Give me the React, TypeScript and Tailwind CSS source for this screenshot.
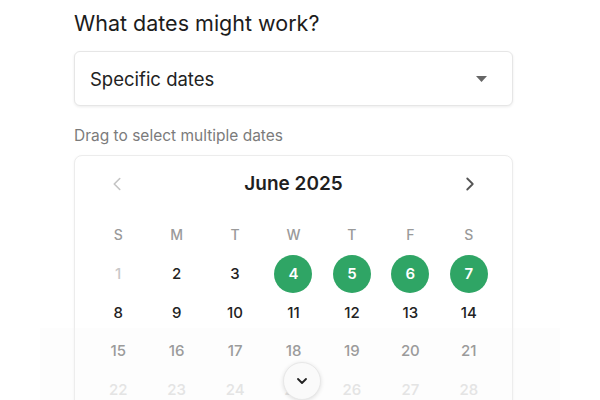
import React from 'react'
import { ChevronLeft, ChevronRight, ChevronDown } from 'lucide-react'

const weekdays = ['S', 'M', 'T', 'W', 'T', 'F', 'S']

const weeks = [
  [1, 2, 3, 4, 5, 6, 7],
  [8, 9, 10, 11, 12, 13, 14],
  [15, 16, 17, 18, 19, 20, 21],
  [22, 23, 24, 25, 26, 27, 28],
]

const selected = [4, 5, 6, 7]

function dayColor(row: number, day: number) {
  if (day === 1) return 'text-[#c8c8c8]'
  if (row === 1) return 'text-[#222222]'
  if (row === 2) return 'text-[#858585]'
  if (row === 3) return 'text-[#e0e0e0]'
  return 'text-[#222222]'
}

export default function App() {
  return (
    <div
      className="relative h-[400px] w-[600px] overflow-hidden bg-white"
      style={{ fontFamily: 'Inter, "Noto Sans", sans-serif' }}
    >
      <div className="ml-[74px] w-[439px] pt-[9px]">
        {/* Question */}
        <h1 className="h-[28px] text-[21.5px] leading-[28px] font-normal text-[#1c1c1c]">
          What dates might work?
        </h1>

        {/* Select */}
        <div className="mt-[14px] flex h-[55px] items-center justify-between rounded-md border border-[#e6e6e6] bg-white pr-[25px] pl-[15px] shadow-[0_1px_3px_rgba(0,0,0,0.08)]">
          <span className="mt-[2px] text-[18.5px] text-[#222222]">Specific dates</span>
          <svg width="11" height="6" viewBox="0 0 11 6" className="mt-[1px]">
            <path d="M0 0 L11 0 L5.5 6 Z" fill="#666666" />
          </svg>
        </div>

        <p className="mt-[20px] h-[20px] text-[15.5px] leading-[20px] text-[#7b7b7b]">
          Drag to select multiple dates
        </p>

        {/* Calendar */}
        <div className="mt-[9px] rounded-lg border border-[#ececec] bg-white px-[14px] pt-[8px] pb-4 shadow-[0_1px_3px_rgba(0,0,0,0.05)]">
          <div className="flex h-[40px] items-center justify-between px-[17px]">
            <ChevronLeft className="h-[22px] w-[22px] text-[#c4c4c4]" strokeWidth={1.75} />
            <span className="text-[19px] font-semibold text-[#1f1f1f]">June 2025</span>
            <ChevronRight className="h-[22px] w-[22px] text-[#555555]" strokeWidth={2} />
          </div>

          <div className="mt-[11px] grid h-[39px] grid-cols-7">
            {weekdays.map((w, i) => (
              <div
                key={i}
                className="flex items-center justify-center text-[14px] font-medium text-[#9a9a9a]"
              >
                {w}
              </div>
            ))}
          </div>

          <div className="mt-[1px] grid grid-cols-7 auto-rows-[38.5px]">
            {weeks.map((week, r) =>
              week.map((d) => (
                <div key={d} className="flex items-center justify-center">
                  {selected.includes(d) ? (
                    <span className="flex h-[38px] w-[38px] items-center justify-center rounded-full bg-[#2fa565] text-[15px] font-semibold text-white">
                      {d}
                    </span>
                  ) : (
                    <span className={`text-[15px] font-medium ${dayColor(r, d)}`}>{d}</span>
                  )}
                </div>
              )),
            )}
          </div>
        </div>
      </div>

      {/* Bottom fade */}
      <div className="pointer-events-none absolute right-[40px] bottom-0 left-[40px] h-[72px] bg-[#f5f5f5]/20" />

      {/* Scroll button */}
      <button className="absolute top-[362px] left-[283px] flex h-[38px] w-[38px] items-center justify-center rounded-full border border-[#e8e8e8] bg-[#fafafa] shadow-[0_1px_4px_rgba(0,0,0,0.12)]">
        <ChevronDown className="h-[16px] w-[16px] text-[#222222]" strokeWidth={2.75} />
      </button>
    </div>
  )
}
